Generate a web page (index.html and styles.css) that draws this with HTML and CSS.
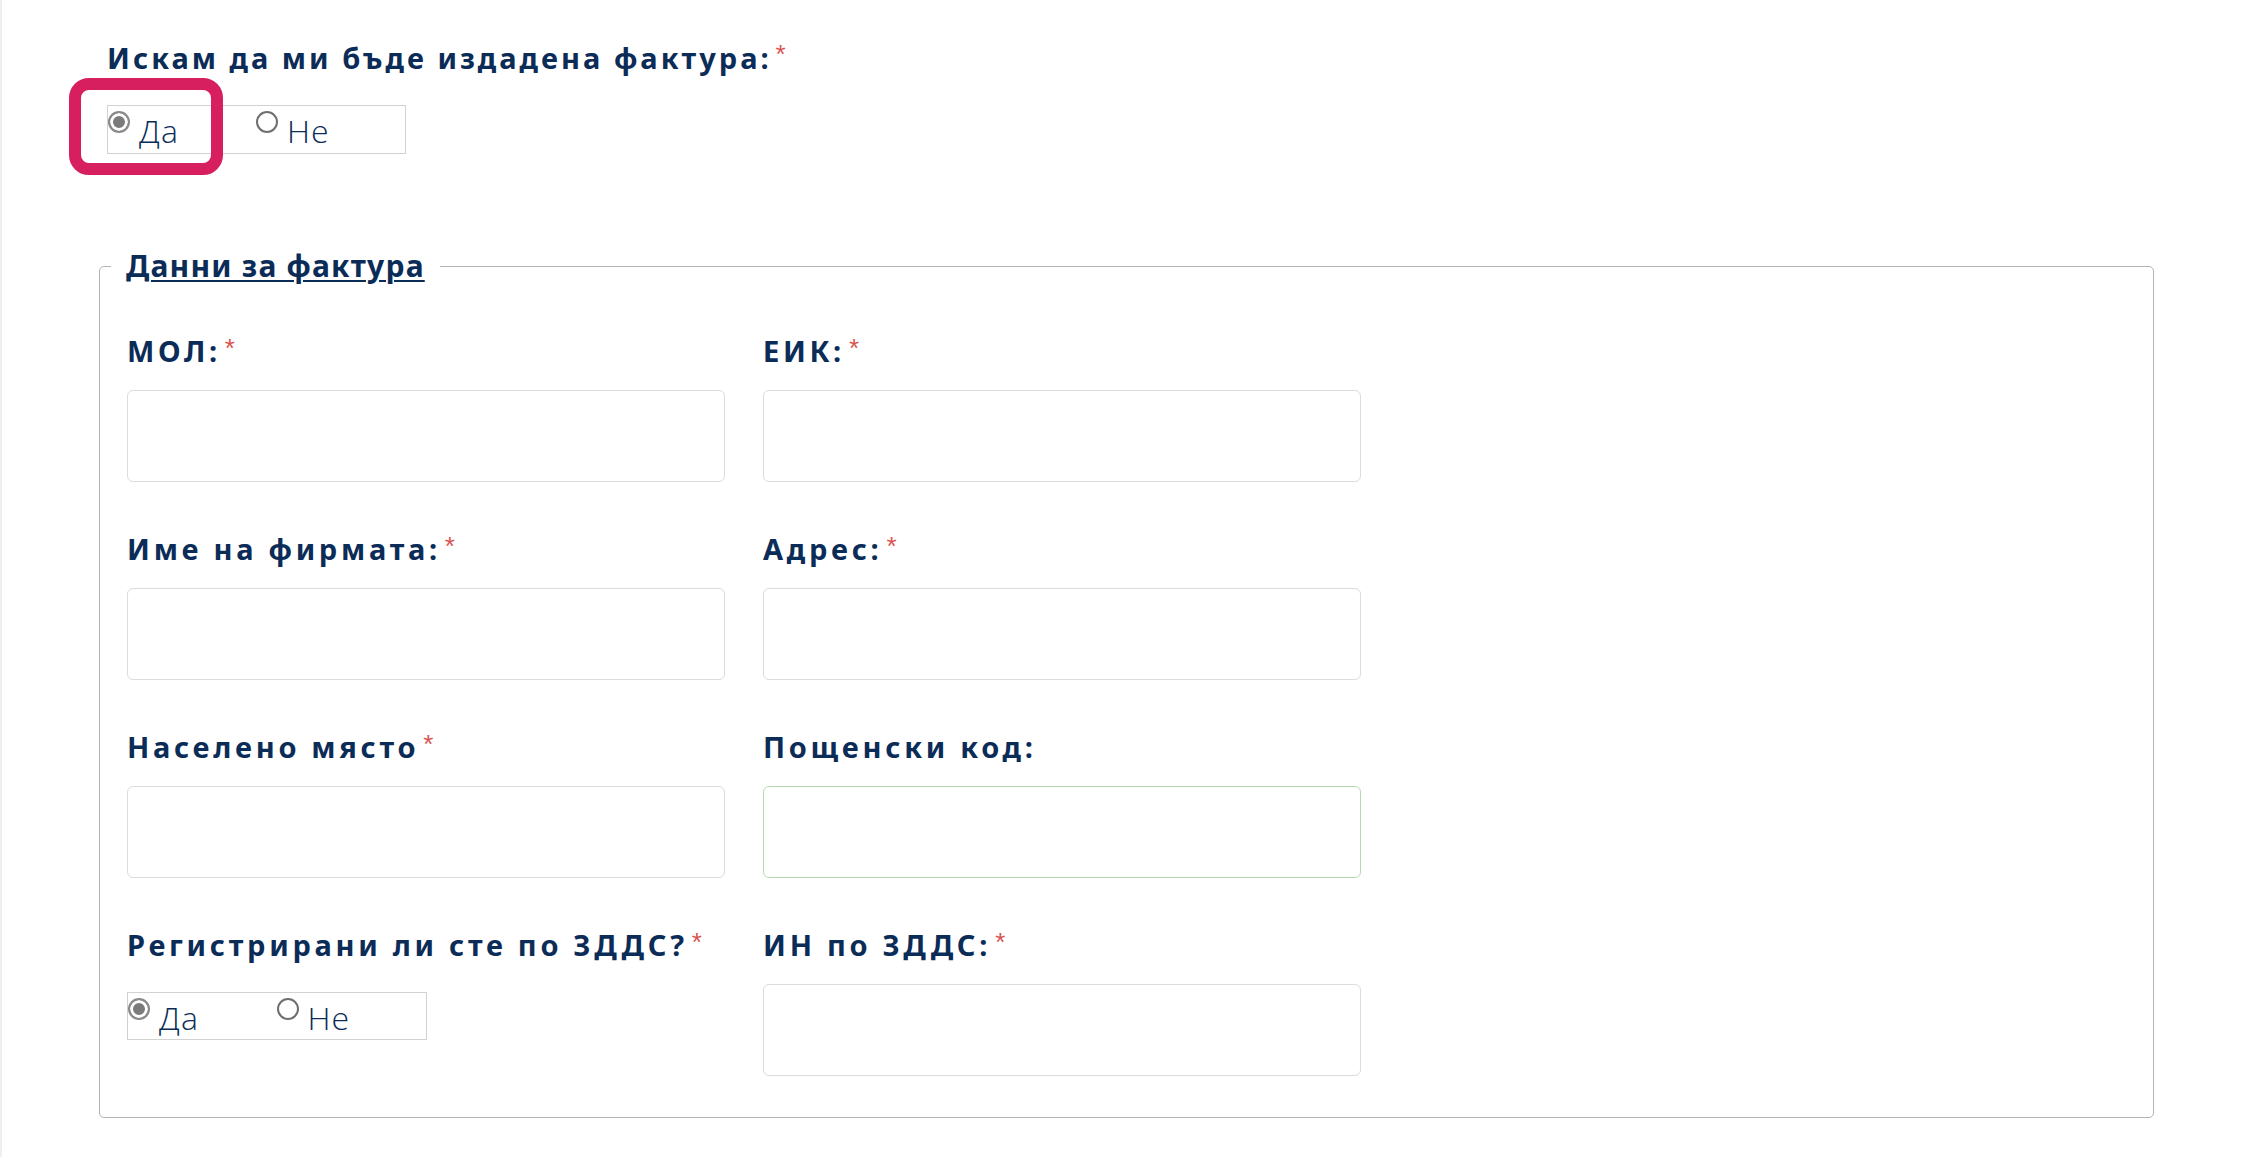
FILE: index.html
```html
<!DOCTYPE html>
<html lang="bg">
<head>
    <meta charset="UTF-8">
    <meta name="viewport" content="width=device-width, initial-scale=1.0">
    <title>Данни за фактура</title>
    <link rel="stylesheet" href="styles.css">
</head>
<body>
    <div class="page">
        <div class="field-top">
            <label class="label heading">Искам да ми бъде издадена фактура:<span class="req">*</span></label>
            <div class="choice-wrap">
                <div class="choice">
                    <label class="opt"><input type="radio" name="faktura" checked><span>Да</span></label>
                    <label class="opt"><input type="radio" name="faktura"><span>Не</span></label>
                </div>
                <span class="mark"></span>
            </div>
        </div>

        <fieldset class="invoice">
            <legend>Данни за фактура</legend>
            <div class="grid">
                <div class="field">
                    <label class="label" for="mol">МОЛ:<span class="req">*</span></label>
                    <input class="inp" type="text" id="mol">
                </div>
                <div class="field">
                    <label class="label" for="eik">ЕИК:<span class="req">*</span></label>
                    <input class="inp" type="text" id="eik">
                </div>
                <div class="field">
                    <label class="label" for="firma">Име на фирмата:<span class="req">*</span></label>
                    <input class="inp" type="text" id="firma">
                </div>
                <div class="field">
                    <label class="label" for="adres">Адрес:<span class="req">*</span></label>
                    <input class="inp" type="text" id="adres">
                </div>
                <div class="field">
                    <label class="label" for="grad">Населено място<span class="req">*</span></label>
                    <input class="inp" type="text" id="grad">
                </div>
                <div class="field">
                    <label class="label" for="pk">Пощенски код:</label>
                    <input class="inp valid" type="text" id="pk">
                </div>
                <div class="field">
                    <label class="label">Регистрирани ли сте по ЗДДС?<span class="req">*</span></label>
                    <div class="choice small">
                        <label class="opt"><input type="radio" name="dds" checked><span>Да</span></label>
                        <label class="opt"><input type="radio" name="dds"><span>Не</span></label>
                    </div>
                </div>
                <div class="field">
                    <label class="label" for="indds">ИН по ЗДДС:<span class="req">*</span></label>
                    <input class="inp" type="text" id="indds">
                </div>
            </div>
        </fieldset>
    </div>
</body>
</html>
```

FILE: styles.css
```css
body {
    margin: 0;
    background: #fff;
    font-family: "Noto Sans", "Open Sans", sans-serif;
    color: #0c2c58;
}
.page {
    min-height: 100vh;
    border-left: 2px solid #efefef;
    padding: 40px 0 0 97px;
    box-sizing: border-box;
}
.label {
    display: block;
    font-weight: 700;
    font-size: 29px;
    line-height: 34px;
    letter-spacing: 3.7px;
}
.heading {
    line-height: 36px;
    letter-spacing: 3px;
    margin-left: 8px;
}
.req {
    color: #d9534f;
    font-family: "Liberation Sans", sans-serif;
    font-weight: 400;
    font-size: 26px;
    letter-spacing: 0;
    vertical-align: top;
    margin-left: 4px;
    line-height: 28px;
}
.choice-wrap {
    position: relative;
    display: inline-block;
    margin: 29px 0 0 8px;
}
.choice {
    display: flex;
    width: 299px;
    height: 49px;
    box-sizing: border-box;
    border: 1px solid #d2d2d2;
}
.choice.small {
    width: 300px;
    height: 48px;
    margin-top: 30px;
}
.opt {
    display: flex;
    align-items: flex-start;
    width: 150px;
    font-family: "Open Sans", sans-serif;
    font-weight: 300;
    font-size: 32px;
    line-height: 38px;
    letter-spacing: 1px;
    color: #0c2c58;
}
.opt:first-child {
    width: 149px;
}
.opt input {
    appearance: none;
    width: 22px;
    height: 22px;
    margin: 5px 9px 0 0;
    border: 2px solid #6f6f6f;
    border-radius: 50%;
    background: #fff;
    box-sizing: border-box;
}
.opt input:checked {
    border-color: #8a8a8a;
    background: #7b7b7b;
    box-shadow: inset 0 0 0 3px #fff;
}
.opt span {
    padding-top: 6px;
}
.mark {
    position: absolute;
    left: -38px;
    top: -27px;
    width: 154px;
    height: 97px;
    box-sizing: border-box;
    border: 12px solid #d71f5f;
    border-radius: 20px;
}
.invoice {
    margin: 94px 0 0 0;
    width: 2055px;
    box-sizing: border-box;
    border: 1px solid #b4b4b4;
    border-radius: 5px;
    padding: 50px 0 41px 27px;
}
.invoice legend {
    font-weight: 700;
    font-size: 30px;
    line-height: 36px;
    letter-spacing: 1.2px;
    text-decoration: underline;
    text-decoration-thickness: 2px;
    text-underline-offset: 3px;
    padding: 0 15px;
    margin-left: -16px;
}
.grid {
    display: grid;
    grid-template-columns: 598px 598px;
    column-gap: 38px;
    row-gap: 50px;
}
.field .label {
    margin-bottom: 22px;
}
.inp {
    display: block;
    width: 598px;
    height: 92px;
    box-sizing: border-box;
    border: 1px solid #dcdcdc;
    border-radius: 6px;
    background: #fff;
    font-size: 24px;
    padding: 0 16px;
}
.inp.valid {
    border-color: #b6dab0;
}
```
